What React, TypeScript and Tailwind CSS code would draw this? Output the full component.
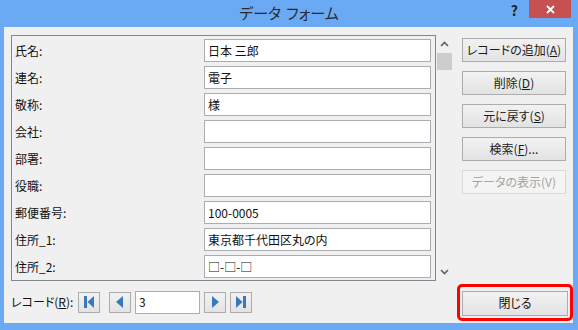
import React from "react";

type Field = { label: string; value: string };

const fields: Field[] = [
  { label: "氏名:", value: "日本 三郎" },
  { label: "連名:", value: "電子" },
  { label: "敬称:", value: "様" },
  { label: "会社:", value: "" },
  { label: "部署:", value: "" },
  { label: "役職:", value: "" },
  { label: "郵便番号:", value: "100-0005" },
  { label: "住所_1:", value: "東京都千代田区丸の内" },
  { label: "住所_2:", value: "□-□-□" },
];

function SideButton({ children, disabled }: { children: React.ReactNode; disabled?: boolean }) {
  return (
    <button
      className={
        disabled
          ? "h-[24px] w-[104px] border border-[#d9d9d9] bg-[#f4f4f4] text-[12px] text-[#a3a3a3]"
          : "h-[24px] w-[104px] border border-[#acacac] bg-gradient-to-b from-[#f2f2f2] to-[#e3e3e3] text-[12px] text-[#1a1a1a]"
      }
    >
      {children}
    </button>
  );
}

function NavButton({ dir }: { dir: "first" | "prev" | "next" | "last" }) {
  return (
    <button className="flex h-[21px] w-[22px] items-center justify-center border border-[#acacac] bg-gradient-to-b from-[#f2f2f2] to-[#e3e3e3]">
      <svg width="12" height="12" viewBox="0 0 12 12">
        {dir === "first" && (
          <>
            <rect x="1" y="0" width="3" height="12" fill="#3b78bb" />
            <path d="M11 0 L4.5 6 L11 12 Z" fill="#3b78bb" />
          </>
        )}
        {dir === "prev" && <path d="M9 0 L2 6 L9 12 Z" fill="#3b78bb" />}
        {dir === "next" && <path d="M3 0 L10 6 L3 12 Z" fill="#3b78bb" />}
        {dir === "last" && (
          <>
            <path d="M1 0 L7.5 6 L1 12 Z" fill="#3b78bb" />
            <rect x="8" y="0" width="3" height="12" fill="#3b78bb" />
          </>
        )}
      </svg>
    </button>
  );
}

export default function App() {
  return (
    <div className="flex h-[330px] w-[578px] flex-col bg-[#6aaaf4] font-['Noto_Sans_CJK_JP',sans-serif] [font-feature-settings:'palt'] text-[#111]">
      {/* title bar */}
      <div className="grid h-[27px] grid-cols-[1fr_auto_1fr]">
        <div />
        <div className="flex items-center text-[15px] text-[#2b2b2b]">
          データ<span className="ml-[5px]">フォーム</span>
        </div>
        <div className="flex items-start justify-end">
          <div className="mr-[11px] mt-[3px] text-[14px] font-bold leading-none text-[#222]">?</div>
          <div className="mr-[7px] flex h-[18px] w-[42px] items-center justify-center bg-[#c75050]">
            <svg width="9" height="9" viewBox="0 0 9 9">
              <path d="M1 1 L8 8 M8 1 L1 8" stroke="white" strokeWidth="1.8" />
            </svg>
          </div>
        </div>
      </div>

      {/* body */}
      <div className="mb-[7px] ml-[4px] mr-[5px] flex flex-1 flex-col bg-[#f0f0f0] pl-[7px] pt-[8px]">
        <div className="flex">
          <div className="flex h-[246px] w-[425px] flex-col gap-[4px] border border-[#828790] pt-[3px]">
            {fields.map((f) => (
              <div key={f.label} className="flex h-[23px] items-center">
                <div className="w-[192px] pl-[3px] text-[12px]">{f.label}</div>
                <div className="flex h-[23px] w-[227px] items-center border border-[#abadb3] bg-white px-[3px] text-[12px]">
                  {f.value}
                </div>
              </div>
            ))}
          </div>

          {/* scrollbar */}
          <div className="flex h-[246px] w-[17px] flex-col">
            <div className="flex h-[18px] items-center justify-center">
              <svg width="9" height="6" viewBox="0 0 9 6">
                <path d="M1 5 L4.5 1.5 L8 5" stroke="#606060" strokeWidth="1.6" fill="none" />
              </svg>
            </div>
            <div className="ml-[1px] h-[17px] w-[15px] bg-[#cdcdcd]" />
            <div className="flex-1" />
            <div className="flex h-[18px] items-center justify-center">
              <svg width="9" height="6" viewBox="0 0 9 6">
                <path d="M1 1 L4.5 4.5 L8 1" stroke="#606060" strokeWidth="1.6" fill="none" />
              </svg>
            </div>
          </div>

          {/* side buttons */}
          <div className="ml-[9px] mt-[3px] flex flex-col gap-[9px]">
            <SideButton>
              レコードの追加(<span className="underline">A</span>)
            </SideButton>
            <SideButton>
              削除(<span className="underline">D</span>)
            </SideButton>
            <SideButton>
              元に戻す(<span className="underline">S</span>)
            </SideButton>
            <SideButton>
              検索(<span className="underline">F</span>)...
            </SideButton>
            <SideButton disabled>データの表示(V)</SideButton>
          </div>
        </div>

        {/* bottom row */}
        <div className="mt-[3px] flex items-center">
          <div className="w-[67px] text-[12px]">
            レコード(<span className="underline">R</span>):
          </div>
          <div className="flex items-center gap-[4px]">
            <NavButton dir="first" />
            <div className="w-px" />
            <NavButton dir="prev" />
            <div className="flex h-[23px] w-[65px] items-center border border-[#abadb3] bg-white px-[3px] text-[12px]">3</div>
            <NavButton dir="next" />
            <NavButton dir="last" />
          </div>
          <div className="ml-auto rounded-[5px] border-[3px] border-[#ff0000] p-[2px]">
            <button className="h-[25px] w-[106px] border border-[#acacac] bg-gradient-to-b from-[#f2f2f2] to-[#e3e3e3] text-[12px]">
              閉じる
            </button>
          </div>
        </div>
      </div>
    </div>
  );
}
